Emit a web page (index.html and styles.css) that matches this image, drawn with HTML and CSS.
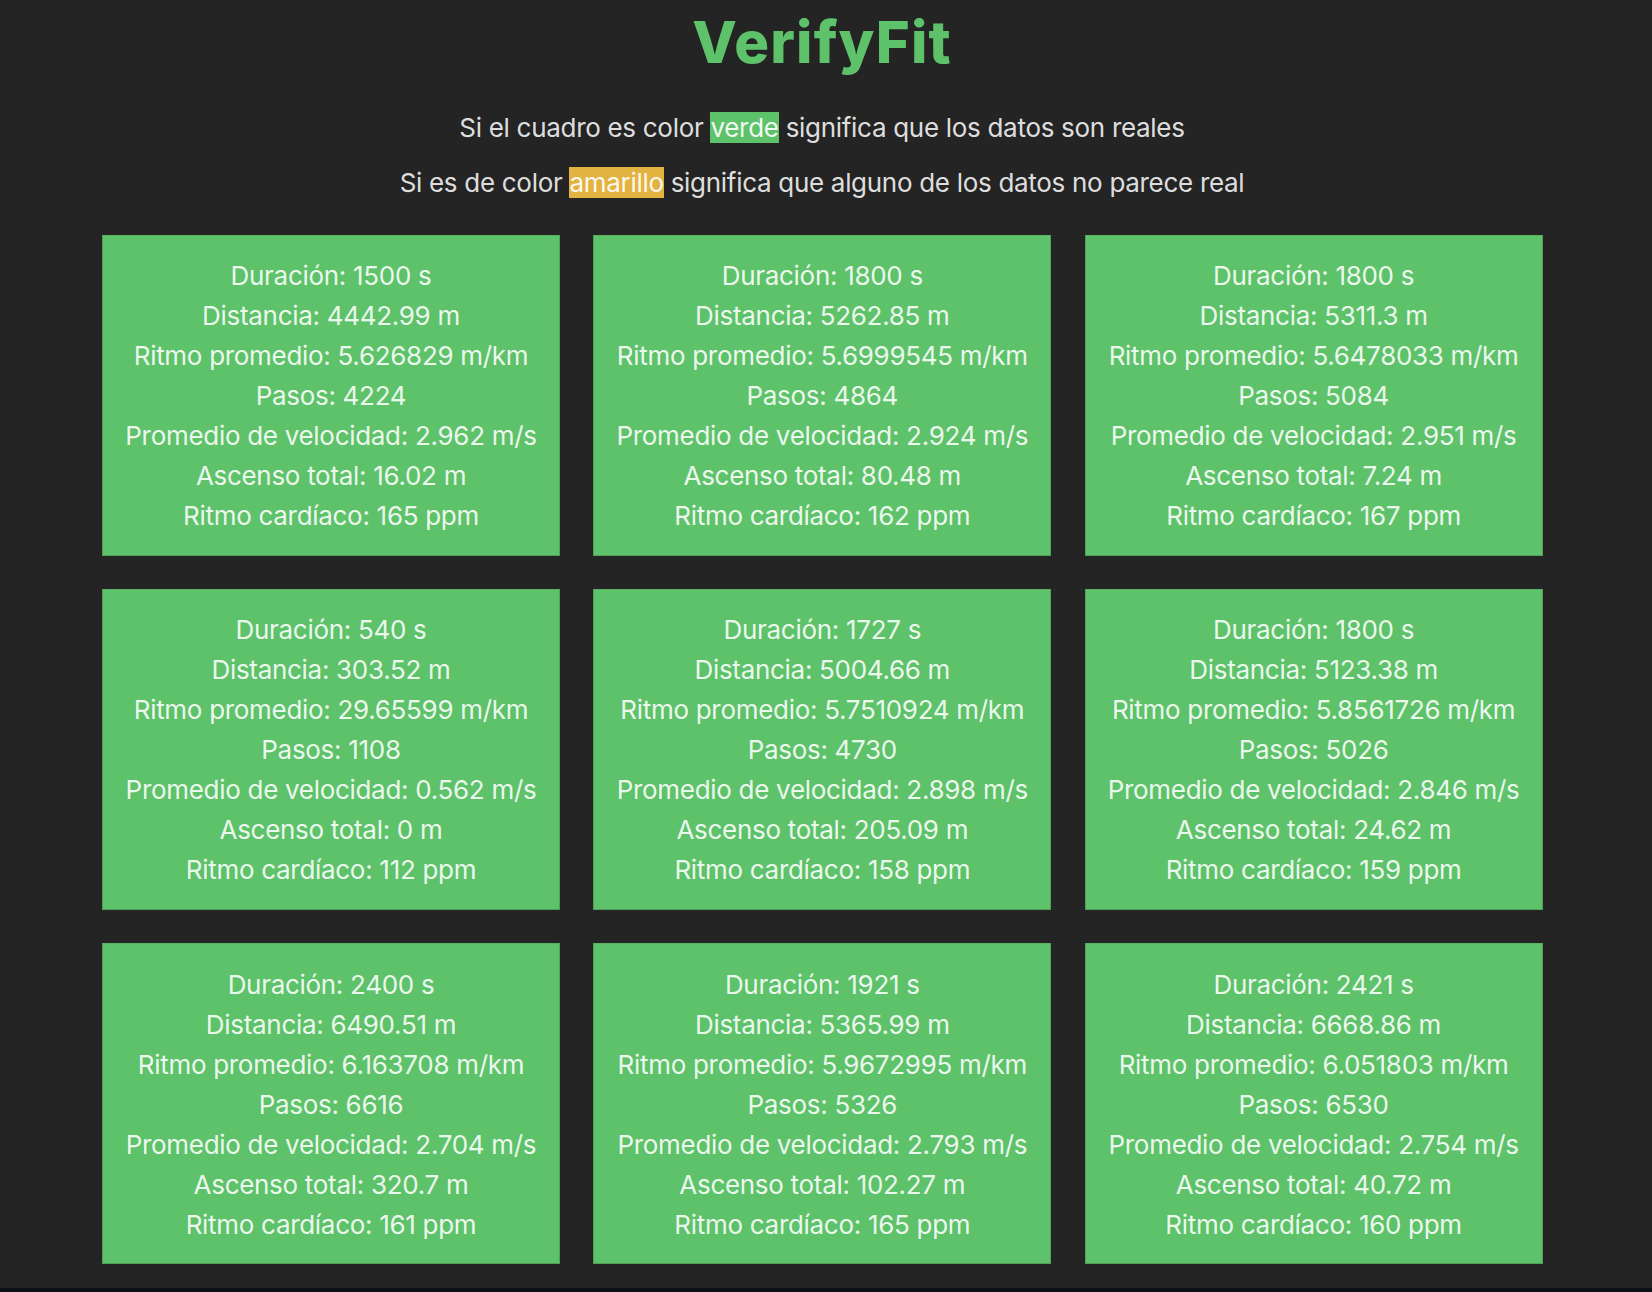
FILE: index.html
```html
<!DOCTYPE html>
<html lang="es">
<head>
<meta charset="utf-8">
<title>VerifyFit</title>
<link rel="stylesheet" href="styles.css">
</head>
<body>
<div class="app">
  <h1 class="title">VerifyFit</h1>
  <div class="legend">
    <p class="legend-line">Si el cuadro es color <span class="mark mark-green">verde</span> significa que los datos son reales</p>
    <p class="legend-line">Si es de color <span class="mark mark-yellow">amarillo</span> significa que alguno de los datos no parece real</p>
  </div>
  <div class="grid">
    <div class="card">
      <div class="row">Duración: 1500 s</div>
      <div class="row">Distancia: 4442.99 m</div>
      <div class="row">Ritmo promedio: 5.626829 m/km</div>
      <div class="row">Pasos: 4224</div>
      <div class="row">Promedio de velocidad: 2.962 m/s</div>
      <div class="row">Ascenso total: 16.02 m</div>
      <div class="row">Ritmo cardíaco: 165 ppm</div>
    </div>
    <div class="card">
      <div class="row">Duración: 1800 s</div>
      <div class="row">Distancia: 5262.85 m</div>
      <div class="row">Ritmo promedio: 5.6999545 m/km</div>
      <div class="row">Pasos: 4864</div>
      <div class="row">Promedio de velocidad: 2.924 m/s</div>
      <div class="row">Ascenso total: 80.48 m</div>
      <div class="row">Ritmo cardíaco: 162 ppm</div>
    </div>
    <div class="card">
      <div class="row">Duración: 1800 s</div>
      <div class="row">Distancia: 5311.3 m</div>
      <div class="row">Ritmo promedio: 5.6478033 m/km</div>
      <div class="row">Pasos: 5084</div>
      <div class="row">Promedio de velocidad: 2.951 m/s</div>
      <div class="row">Ascenso total: 7.24 m</div>
      <div class="row">Ritmo cardíaco: 167 ppm</div>
    </div>
    <div class="card">
      <div class="row">Duración: 540 s</div>
      <div class="row">Distancia: 303.52 m</div>
      <div class="row">Ritmo promedio: 29.65599 m/km</div>
      <div class="row">Pasos: 1108</div>
      <div class="row">Promedio de velocidad: 0.562 m/s</div>
      <div class="row">Ascenso total: 0 m</div>
      <div class="row">Ritmo cardíaco: 112 ppm</div>
    </div>
    <div class="card">
      <div class="row">Duración: 1727 s</div>
      <div class="row">Distancia: 5004.66 m</div>
      <div class="row">Ritmo promedio: 5.7510924 m/km</div>
      <div class="row">Pasos: 4730</div>
      <div class="row">Promedio de velocidad: 2.898 m/s</div>
      <div class="row">Ascenso total: 205.09 m</div>
      <div class="row">Ritmo cardíaco: 158 ppm</div>
    </div>
    <div class="card">
      <div class="row">Duración: 1800 s</div>
      <div class="row">Distancia: 5123.38 m</div>
      <div class="row">Ritmo promedio: 5.8561726 m/km</div>
      <div class="row">Pasos: 5026</div>
      <div class="row">Promedio de velocidad: 2.846 m/s</div>
      <div class="row">Ascenso total: 24.62 m</div>
      <div class="row">Ritmo cardíaco: 159 ppm</div>
    </div>
    <div class="card">
      <div class="row">Duración: 2400 s</div>
      <div class="row">Distancia: 6490.51 m</div>
      <div class="row">Ritmo promedio: 6.163708 m/km</div>
      <div class="row">Pasos: 6616</div>
      <div class="row">Promedio de velocidad: 2.704 m/s</div>
      <div class="row">Ascenso total: 320.7 m</div>
      <div class="row">Ritmo cardíaco: 161 ppm</div>
    </div>
    <div class="card">
      <div class="row">Duración: 1921 s</div>
      <div class="row">Distancia: 5365.99 m</div>
      <div class="row">Ritmo promedio: 5.9672995 m/km</div>
      <div class="row">Pasos: 5326</div>
      <div class="row">Promedio de velocidad: 2.793 m/s</div>
      <div class="row">Ascenso total: 102.27 m</div>
      <div class="row">Ritmo cardíaco: 165 ppm</div>
    </div>
    <div class="card">
      <div class="row">Duración: 2421 s</div>
      <div class="row">Distancia: 6668.86 m</div>
      <div class="row">Ritmo promedio: 6.051803 m/km</div>
      <div class="row">Pasos: 6530</div>
      <div class="row">Promedio de velocidad: 2.754 m/s</div>
      <div class="row">Ascenso total: 40.72 m</div>
      <div class="row">Ritmo cardíaco: 160 ppm</div>
    </div>
  </div>
</div>
</body>
</html>
```

FILE: styles.css
```css
html {
  background: #0d1117;
}
body {
  margin: 0;
  background: #242424;
  color: rgba(255, 255, 255, 0.87);
  font-family: Inter, "Noto Sans", "Liberation Sans", sans-serif;
  padding-bottom: 24px;
}
.app {
  width: 1440px;
  margin-left: 102px;
  text-align: center;
}
.title {
  margin: 7px 0 0;
  font-size: 58px;
  line-height: 70px;
  font-weight: 800;
  color: #5ec26a;
  letter-spacing: 1.2px;
}
.legend {
  margin-top: 23px;
}
.legend-line {
  margin: 0;
  font-size: 26px;
  line-height: 55px;
  letter-spacing: -0.3px;
}
.mark {
  color: rgba(255, 255, 255, 0.92);
}
.mark-green {
  background: #5ec26a;
}
.mark-yellow {
  background: #e3b341;
}
.grid {
  margin-top: 24.7px;
  display: grid;
  grid-template-columns: repeat(3, 458px);
  column-gap: 33.3px;
  row-gap: 33.3px;
}
.card {
  background: #5ec26a;
  border: 1px solid #4f9f59;
  border-top-color: #57b262;
  padding: 20.5px 0 18.5px;
  color: rgba(255, 255, 255, 0.9);
}
.row {
  font-size: 26px;
  line-height: 40px;
  letter-spacing: -0.3px;
}
```
